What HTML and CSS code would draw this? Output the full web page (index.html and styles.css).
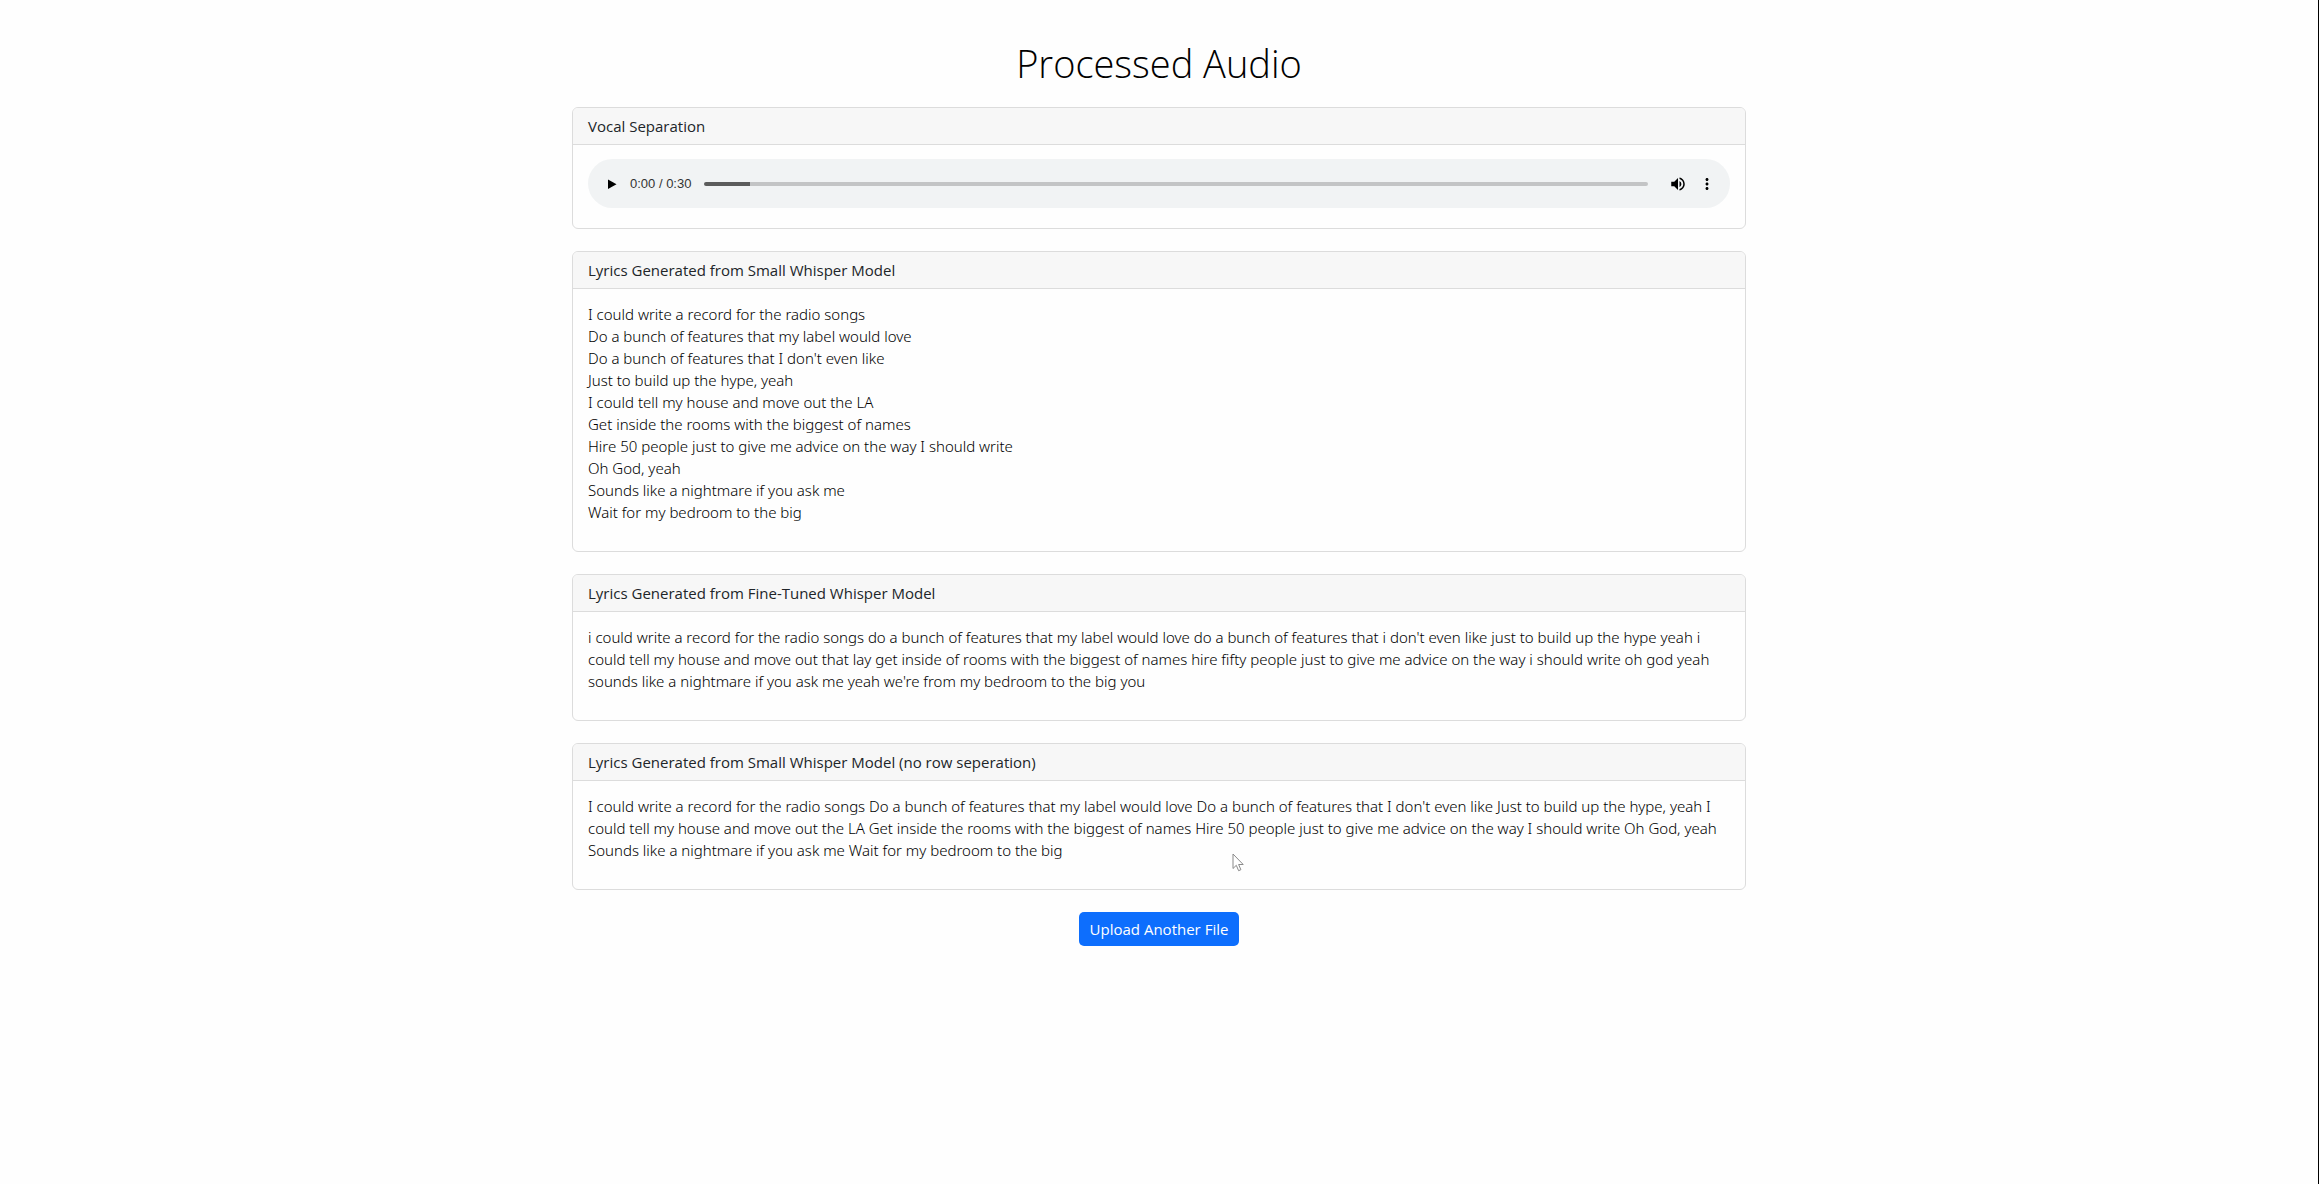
FILE: index.html
```html
<!DOCTYPE html>
<html lang="en">
<head>
<meta charset="utf-8">
<meta name="viewport" content="width=device-width, initial-scale=1">
<title>Processed Audio</title>
<link rel="stylesheet" href="styles.css">
</head>
<body>
<main class="container">
  <h1 class="title">Processed Audio</h1>

  <section class="card">
    <h2 class="card-header">Vocal Separation</h2>
    <div class="card-body">
      <div class="player">
        <button class="player-button" type="button" aria-label="Play">
          <svg width="22" height="22" viewBox="0 0 22 22" aria-hidden="true"><path d="M7 6.5v9.5l8.5-4.75z"/></svg>
        </button>
        <span class="player-time">0:00 / 0:30</span>
        <input class="player-seek" type="range" min="0" max="30" value="0" aria-label="Audio time">
        <button class="player-button" type="button" aria-label="Mute">
          <svg width="18" height="18" viewBox="0 0 24 24" aria-hidden="true"><path d="M3 9v6h4l5 5V4L7 9H3zm13.500 3A4.500 4.500 0 0 0 14 7.970v8.050c1.480-.73 2.500-2.250 2.500-4.020zM14 3.230v2.060c2.890.86 5 3.540 5 6.710s-2.110 5.850-5 6.710v2.060c4.010-.91 7-4.490 7-8.770s-2.990-7.860-7-8.770z"/></svg>
        </button>
        <button class="player-button" type="button" aria-label="More options">
          <svg width="18" height="18" viewBox="0 0 24 24" aria-hidden="true"><path d="M12 8c1.100 0 2-.9 2-2s-.9-2-2-2-2 .9-2 2 .9 2 2 2zm0 2c-1.100 0-2 .9-2 2s.9 2 2 2 2-.9 2-2-.9-2-2-2zm0 6c-1.100 0-2 .9-2 2s.9 2 2 2 2-.9 2-2-.9-2-2-2z"/></svg>
        </button>
      </div>
    </div>
  </section>

  <section class="card">
    <h2 class="card-header">Lyrics Generated from Small Whisper Model</h2>
    <div class="card-body">
      <p class="lyrics">I could write a record for the radio songs<br>
      Do a bunch of features that my label would love<br>
      Do a bunch of features that I don't even like<br>
      Just to build up the hype, yeah<br>
      I could tell my house and move out the LA<br>
      Get inside the rooms with the biggest of names<br>
      Hire 50 people just to give me advice on the way I should write<br>
      Oh God, yeah<br>
      Sounds like a nightmare if you ask me<br>
      Wait for my bedroom to the big</p>
    </div>
  </section>

  <section class="card">
    <h2 class="card-header">Lyrics Generated from Fine-Tuned Whisper Model</h2>
    <div class="card-body">
      <p class="lyrics">i could write a record for the radio songs do a bunch of features that my label would love do a bunch of features that i don't even like just to build up the hype yeah i could tell my house and move out that lay get inside of rooms with the biggest of names hire fifty people just to give me advice on the way i should write oh god yeah sounds like a nightmare if you ask me yeah we're from my bedroom to the big you</p>
    </div>
  </section>

  <section class="card">
    <h2 class="card-header">Lyrics Generated from Small Whisper Model (no row seperation)</h2>
    <div class="card-body">
      <p class="lyrics">I could write a record for the radio songs Do a bunch of features that my label would love Do a bunch of features that I don't even like Just to build up the hype, yeah I could tell my house and move out the LA Get inside the rooms with the biggest of names Hire 50 people just to give me advice on the way I should write Oh God, yeah Sounds like a nightmare if you ask me Wait for my bedroom to the big</p>
    </div>
    <svg class="pointer" width="12" height="19" viewBox="0 0 12 19" aria-hidden="true"><path d="M1 1v14.500l3.300-3.200 2.300 5.400 2.300-1-2.300-5.200h4.600z"/></svg>
  </section>

  <a class="button" href="#">Upload Another File</a>
</main>
</body>
</html>
```
FILE: styles.css
```css
*,
*::before,
*::after {
  box-sizing: border-box;
}

body {
  min-height: 100vh;
  margin: 0;
  border-right: 1px solid #000;
  background: #fefefe;
  color: #212529;
  font: 400 15px/22px "Open Sans", "Noto Sans", sans-serif;
}

.container {
  display: flex;
  flex-direction: column;
  gap: 22px;
  width: 100%;
  max-width: 1174px;
  margin: 0 auto;
  padding: 41px 0;
}

.title {
  margin: 0;
  color: #000;
  font-size: 38px;
  font-weight: 300;
  line-height: 44px;
  text-align: center;
}

.card {
  position: relative;
  border: 1px solid #dcdcdc;
  border-radius: 6px;
  background: #fefefe;
}

.card-header {
  margin: 0;
  padding: 7px 15px;
  border-bottom: 1px solid #dcdcdc;
  border-radius: 5px 5px 0 0;
  background: #f7f7f7;
  font-size: 15px;
  font-weight: 400;
}

.card-body {
  padding: 14px 15px;
}

.lyrics {
  margin: 0 0 14px;
  color: #000;
  font-family: "Noto Sans", sans-serif;
  font-weight: 300;
}

.player {
  display: flex;
  align-items: center;
  height: 49px;
  margin-bottom: 6px;
  padding: 0 9px;
  border-radius: 25px;
  background: #f1f3f4;
}

.player-button {
  display: flex;
  flex: none;
  align-items: center;
  justify-content: center;
  width: 29px;
  height: 29px;
  padding: 0;
  border: 0;
  background: none;
}

.player-time {
  flex: none;
  margin: 0 13px 0 4px;
  color: #333;
  font: 400 13px/22px "Liberation Sans", Arial, sans-serif;
}

.player-seek {
  flex: 1;
  min-width: 0;
  height: 4px;
  margin: 0 15px 0 0;
  border-radius: 2px;
  appearance: none;
  /* Dark part: how much of the track has loaded */
  background: linear-gradient(to right, #5c5c5c 46px, #c3c4c5 46px);
}

.player-seek::-webkit-slider-thumb {
  width: 0;
  height: 0;
  appearance: none;
}

.button {
  align-self: center;
  padding: 6px 11px;
  border-radius: 5px;
  background: #0d6efd;
  color: #fff;
  text-decoration: none;
}

.pointer {
  position: absolute;
  top: 109px;
  left: 659px;
  fill: #fff;
  stroke: #8a8a8a;
  stroke-width: 1;
}
```
